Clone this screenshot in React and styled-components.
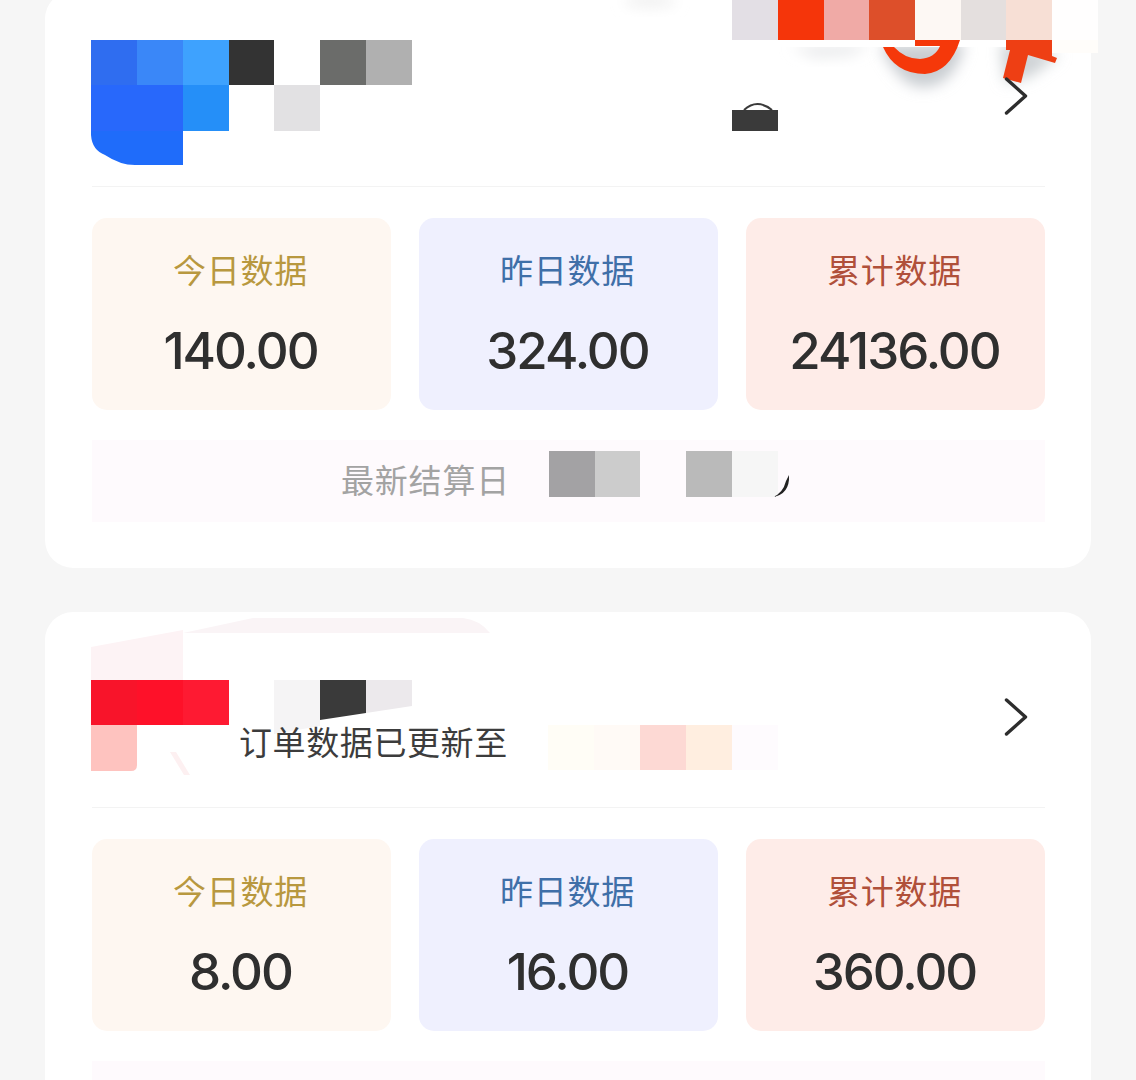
import React from "react";
import styled, { createGlobalStyle } from "styled-components";

const Global = createGlobalStyle`
  html, body { margin: 0; padding: 0; background: #f6f6f6; }
  body { overflow: hidden; font-family: "Noto Sans CJK SC", "Noto Sans", sans-serif; }
`;

const Page = styled.main`
  height: 1080px;
  overflow: hidden;
  padding: 0 45px;
  box-sizing: border-box;
  display: flex;
  flex-direction: column;
  gap: 44px;
`;

const Card = styled.section`
  background: #fff;
  border-radius: 28px;
  padding: 0 46px 46px 47px;
  flex: none;
  &:first-child { margin-top: -9px; }
`;

const Header = styled.header`
  position: relative;
  height: 196px;
  box-sizing: border-box;
  padding: 15px 17px 0 0;
  border-bottom: 1px solid #f3f3f3;
  display: flex;
  align-items: center;
  justify-content: flex-end;
`;

const MosaicLayer = styled.svg`
  position: absolute;
  left: -92px;
  top: 0;
  overflow: visible;
  pointer-events: none;
`;

const UpdateNote = styled.span`
  position: relative;
  align-self: flex-end;
  margin: 0 auto 46px 147px;
  font-size: 33px;
  line-height: 40px;
  letter-spacing: 0.6px;
  color: #3c3c3c;
  white-space: nowrap;
`;

const Chevron = styled.svg`
  position: relative;
  display: block;
  flex: none;
`;

const Stats = styled.div`
  display: grid;
  grid-template-columns: repeat(3, 1fr);
  gap: 28px;
  margin-top: 31px;
`;

const Stat = styled.div`
  height: 192px;
  box-sizing: border-box;
  padding-right: 2px;
  border-radius: 15px;
  background: ${(p) => p.$bg};
  display: flex;
  flex-direction: column;
  align-items: center;
`;

const StatLabel = styled.div`
  margin-top: 28px;
  font-size: 33px;
  line-height: 46px;
  letter-spacing: 0.8px;
  color: ${(p) => p.$color};
`;

const StatValue = styled.div`
  margin-top: 31px;
  font-family: Inter, "Noto Sans", sans-serif;
  font-size: 51px;
  font-weight: 500;
  line-height: 56px;
  letter-spacing: -2px;
  color: #2f2f2f;
`;

const Footer = styled.div`
  height: 82px;
  margin-top: 30px;
  padding-left: 249px;
  background: #fefafd;
  display: flex;
  align-items: center;
  gap: 39px;
`;

const FooterLabel = styled.span`
  margin-bottom: 4px;
  font-size: 33px;
  letter-spacing: 0.8px;
  color: #a3a3a3;
  white-space: nowrap;
`;

const FooterMosaic = styled.svg`
  display: block;
  flex: none;
  overflow: visible;
  align-self: flex-start;
  margin-top: 11px;
`;

const Cells = ({ items }) =>
  items.map(([x, y, w, h, fill]) => (
    <rect key={`${x}-${y}`} x={x} y={y} width={w} height={h} fill={fill} />
  ));

const firstCells = [
  [91, 47, 46, 45, "#2f6df0"],
  [137, 47, 46, 45, "#3a87f8"],
  [183, 47, 46, 45, "#3ea2fe"],
  [229, 47, 45, 45, "#333333"],
  [320, 47, 46, 45, "#6b6c6a"],
  [366, 47, 46, 45, "#b0b0b0"],
  [91, 92, 92, 46, "#2868fb"],
  [183, 92, 46, 46, "#258ff8"],
  [274, 92, 46, 46, "#e2e1e3"],
  [732, 0, 46, 47, "#e3dfe5"],
  [778, 0, 46, 47, "#f5350a"],
  [824, 0, 45, 47, "#f0aaa6"],
  [869, 0, 46, 47, "#dd4f2a"],
  [915, 0, 46, 47, "#fdf8f4"],
  [961, 0, 45, 47, "#e4dfde"],
  [1006, 0, 46, 47, "#f7dfd5"],
  [1052, 0, 46, 47, "#fffefe"],
  [732, 117, 46, 21, "#3a3a3a"],
];

const FirstMosaic = () => (
  <MosaicLayer width="1136" height="196" viewBox="0 -2 1136 196">
    <defs>
      <filter id="soft" x="-40%" y="-80%" width="180%" height="260%">
        <feGaussianBlur stdDeviation="7" />
      </filter>
    </defs>
    <ellipse cx="650" cy="8" rx="26" ry="6" fill="#efefef" filter="url(#soft)" />
    <path d="M790 54 L870 52 L850 62 L815 64 Z" fill="#e6e7e9" filter="url(#soft)" />
    <path d="M880 52 Q900 96 925 94 Q955 92 965 50 Z" fill="#c9cdd1" filter="url(#soft)" />
    <path d="M1000 50 L1060 62 L1030 84 L1005 90 Z" fill="#cfd3d6" filter="url(#soft)" />
    <rect x="732" y="47" width="366" height="7" fill="#fff" />
    <rect x="1052" y="47" width="46" height="13" fill="#fffdfa" />
    <Cells items={firstCells} />
    <path d="M91 138 V142 Q92 157 105 162 Q120 172 135 172 H183 V138 Z" fill="#1f6cfa" />
    <path d="M883 54 Q895 81 925 81 Q950 79 960 47 H915 V53 H940 Q935 65 920 66 Q905 66 894 54 Z" fill="#f5380a" />
    <path d="M1006 47 H1052 V63 L1057 65 L1055 70 L1028 62 L1021 90 L1003 85 L1010 57 L1006 57 Z" fill="#ee3f14" />
    <path d="M744 117 Q757 105 772 117" fill="#fff" stroke="#3a3a3a" strokeWidth="2" />
  </MosaicLayer>
);

const secondCells = [
  [91, 68, 46, 45, "#f8142a"],
  [137, 68, 46, 45, "#fe1129"],
  [183, 68, 46, 45, "#fe1a32"],
  [548, 113, 46, 45, "#fffdf6"],
  [594, 113, 46, 45, "#fffaf6"],
  [640, 113, 46, 45, "#fdd9d4"],
  [686, 113, 46, 45, "#ffeee0"],
  [732, 113, 46, 45, "#fefbfe"],
];

const SecondMosaic = () => (
  <MosaicLayer width="1136" height="196" viewBox="0 0 1136 196">
    <path d="M183 21 L253 6 H463 Q480 8 490 21 Z" fill="#faf4f6" />
    <path d="M91 35 L183 18 V68 H91 Z" fill="#fdf3f5" />
    <Cells items={secondCells} />
    <path d="M91 113 H137 V153 Q137 159 131 159 H91 Z" fill="#fec3bf" />
    <path d="M274 68 H320 V114 L274 122 Z" fill="#f5f4f5" />
    <path d="M366 68 H412 V94 L366 101 Z" fill="#ece9ec" />
    <path d="M320 68 H366 V101 L320 108 Z" fill="#3a3a3a" />
    <path d="M170 140 L176 140 L190 163 L184 163 Z" fill="#fdf0f1" />
  </MosaicLayer>
);

const DateMosaic = () => (
  <FooterMosaic width="229" height="46" viewBox="0 0 229 46">
    <rect x="0" y="0" width="46" height="46" fill="#a3a2a4" />
    <rect x="46" y="0" width="45" height="46" fill="#cccccc" />
    <rect x="137" y="0" width="46" height="46" fill="#bababa" />
    <rect x="183" y="0" width="46" height="46" fill="#f6f6f6" />
    <path d="M240 24 Q241 43 224 46 Q234 42 237 30 Z" fill="#222" />
  </FooterMosaic>
);

const ChevronIcon = () => (
  <Chevron width="24" height="38" viewBox="0 0 24 38" fill="none" aria-hidden="true">
    <path d="M2.5 2 L21.5 19 L2.5 36" stroke="#2d2d2d" strokeWidth="3.4" strokeLinecap="round" strokeLinejoin="round" />
  </Chevron>
);

const palette = [
  { label: "今日数据", bg: "#fef7f1", color: "#b8983f" },
  { label: "昨日数据", bg: "#eff0fe", color: "#3f6fa8" },
  { label: "累计数据", bg: "#feece8", color: "#b0503a" },
];

const Account = ({ mosaic, note, values, footer }) => (
  <Card>
    <Header>
      {mosaic}
      {note && <UpdateNote>{note}</UpdateNote>}
      <ChevronIcon />
    </Header>
    <Stats>
      {palette.map((s, i) => (
        <Stat key={s.label} $bg={s.bg}>
          <StatLabel $color={s.color}>{s.label}</StatLabel>
          <StatValue>{values[i]}</StatValue>
        </Stat>
      ))}
    </Stats>
    <Footer>{footer}</Footer>
  </Card>
);

export default function App() {
  return (
    <>
      <Global />
      <Page>
        <Account
          mosaic={<FirstMosaic />}
          values={["140.00", "324.00", "24136.00"]}
          footer={
            <>
              <FooterLabel>最新结算日</FooterLabel>
              <DateMosaic />
            </>
          }
        />
        <Account mosaic={<SecondMosaic />} note="订单数据已更新至" values={["8.00", "16.00", "360.00"]} />
      </Page>
    </>
  );
}
